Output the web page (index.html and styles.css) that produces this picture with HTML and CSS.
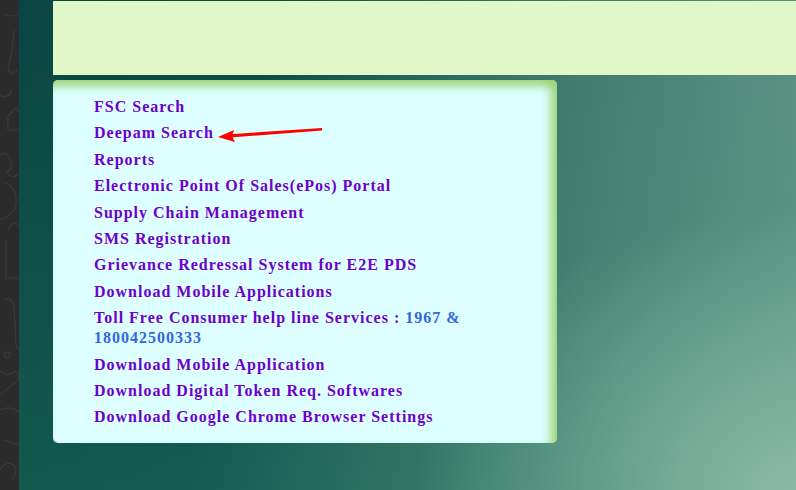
FILE: index.html
```html
<!DOCTYPE html>
<html>
<head>
  <meta charset="utf-8">
  <link rel="stylesheet" href="styles.css">
</head>
<body>
  <div class="side-strip">
    <svg class="doodles" width="19" height="490" viewBox="0 0 19 490">
      <g fill="none" stroke="#3a3a3a" stroke-width="1.2">
        <path d="M4 14 Q10 18 18 14"/>
        <path d="M14 30 L12 50 L8 70 L12 74 L18 70"/>
        <path d="M0 95 Q8 100 12 90"/>
        <path d="M6 118 L16 108 L19 112 M8 118 L8 130 L19 130"/>
        <path d="M0 155 Q6 150 10 160 Q14 170 6 172 Q12 180 18 174"/>
        <path d="M2 182 Q18 185 16 205 Q14 215 0 220"/>
        <path d="M8 230 Q14 218 19 226 M6 240 L6 278 L19 278"/>
        <path d="M4 300 Q10 296 14 305 L16 345 L19 350"/>
        <circle cx="7" cy="355" r="3"/>
        <path d="M0 370 Q6 378 14 372 Q19 368 18 380 L0 395"/>
        <path d="M0 410 Q10 405 19 412"/>
        <path d="M4 440 L19 445 M0 470 Q6 460 14 465 Q19 470 12 480"/>
      </g>
    </svg>
  </div>

  <div class="main">
    <div class="banner"></div>

    <div class="menu-panel">
      <ul class="menu">
        <li><a href="#">FSC Search</a></li>
        <li><a href="#">Deepam Search</a></li>
        <li><a href="#">Reports</a></li>
        <li><a href="#">Electronic Point Of Sales(ePos) Portal</a></li>
        <li><a href="#">Supply Chain Management</a></li>
        <li><a href="#">SMS Registration</a></li>
        <li><a href="#">Grievance Redressal System for E2E PDS</a></li>
        <li><a href="#">Download Mobile Applications</a></li>
        <li>
          <a href="#">Toll Free Consumer help line Services : <span class="helpline">1967 &amp;</span></a><br>
          <a href="#" class="helpline">180042500333</a>
        </li>
        <li><a href="#">Download Mobile Application</a></li>
        <li><a href="#">Download Digital Token Req. Softwares</a></li>
        <li><a href="#">Download Google Chrome Browser Settings</a></li>
      </ul>

      <svg class="pointer-arrow" width="110" height="16" viewBox="0 0 110 16">
        <path d="M12 7.2 L104 1 L104 3.6 L12 10.6 Z" fill="#ff0000"/>
        <path d="M0 10 L16 3 L14 9 L17 15 Z" fill="#ff0000"/>
      </svg>
    </div>
  </div>
</body>
</html>
```

FILE: styles.css
```css
* {
  margin: 0;
  padding: 0;
  box-sizing: border-box;
}

body {
  width: 796px;
  height: 490px;
  display: flex;
  overflow: hidden;
  font-family: 'Liberation Serif', 'Times New Roman', serif;
}

.side-strip {
  width: 19px;
  flex-shrink: 0;
  background: #2b2b2b;
}

.doodles {
  display: block;
}

.main {
  flex: 1;
  padding: 1px 0 0 34px;
  background:
    radial-gradient(ellipse 380px 280px at 100% 100%, rgba(150, 195, 175, 0.8) 0%, rgba(150, 195, 175, 0) 100%),
    linear-gradient(to bottom, rgba(20, 70, 65, 0) 0%, rgba(40, 140, 100, 0.25) 100%),
    linear-gradient(100deg, #0a4543 0%, #0d4a4a 30%, #3d776c 62%, #66998c 100%);
}

.banner {
  height: 74px;
  background: #e0f8c8;
}

.menu-panel {
  position: relative;
  width: 504px;
  height: 363px;
  margin-top: 5px;
  padding: 17px 0 15px 41px;
  background: #ddffff;
  border-radius: 5px;
  box-shadow: inset -6px 6px 10px rgba(150, 205, 100, 0.9);
}

.menu {
  list-style: none;
}

.menu li {
  line-height: 20px;
  margin-bottom: 6.4px;
}

.menu a {
  color: #6e00cc;
  font-size: 16px;
  font-weight: bold;
  letter-spacing: 1px;
  text-decoration: none;
}

.menu .helpline {
  color: #3366dd;
}

.pointer-arrow {
  position: absolute;
  left: 165px;
  top: 47px;
}
```
